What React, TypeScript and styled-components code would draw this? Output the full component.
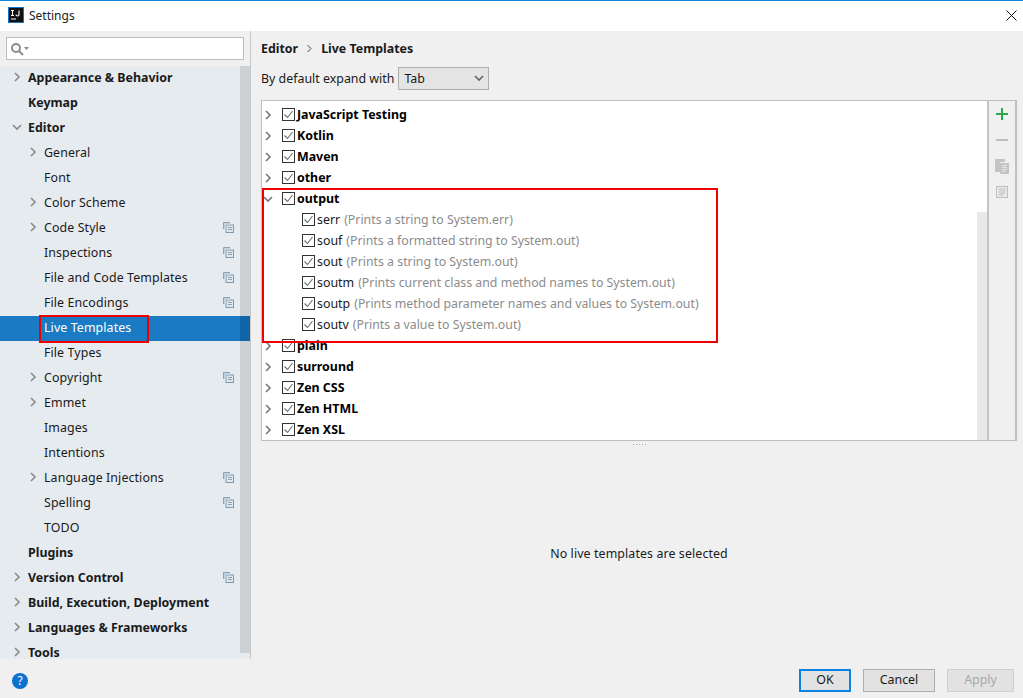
import React from 'react';
import styled, { createGlobalStyle } from 'styled-components';

const GlobalStyle = createGlobalStyle`
  html, body {
    margin: 0;
    padding: 0;
    background: #f0f0f0;
  }
  body {
    font-family: "Noto Sans", "Open Sans", sans-serif;
    font-size: 12.4px;
    color: #1a1a1a;
  }
`;

const Window = styled.div`
  width: 1023px;
  height: 698px;
  display: flex;
  flex-direction: column;
  overflow: hidden;
`;

const TitleBar = styled.div`
  height: 31px;
  flex: none;
  box-sizing: border-box;
  background: #fff;
  border-top: 1px solid #0f86d8;
  display: flex;
  align-items: center;
  padding: 0 6px 2px 8px;
  gap: 5px;
`;

const TitleText = styled.span`
  flex: 1;
  font-size: 12px;
  color: #222;
`;

const Body = styled.div`
  flex: 1;
  min-height: 0;
  display: flex;
`;

const Sidebar = styled.div`
  width: 250px;
  flex: none;
  background: #e6ebf0;
  border-right: 1px solid #c8c8c8;
  box-sizing: content-box;
  display: flex;
  flex-direction: column;
  overflow: hidden;
`;

const SearchWrap = styled.div`
  background: #f0f0f0;
  height: 35px;
  flex: none;
  padding: 6px 6px 0;
  box-sizing: border-box;
`;

const SearchBox = styled.div`
  width: 238px;
  height: 23px;
  box-sizing: border-box;
  background: #fff;
  border: 1px solid #bdbdbd;
  display: flex;
  align-items: center;
  padding-left: 3px;
`;

const TreeArea = styled.div`
  flex: 1;
  min-height: 0;
  display: flex;
`;

const Tree = styled.div`
  flex: 1;
  min-width: 0;
`;

const SideScroll = styled.div`
  width: 10px;
  height: 587px;
  flex: none;
  background: #cdd1d4;
`;

const NavRow = styled.div<{ $selected?: boolean }>`
  position: relative;
  height: 25px;
  box-sizing: border-box;
  padding-bottom: 3px;
  display: flex;
  align-items: center;
  width: 250px;
  background: ${(p) => (p.$selected ? '#1a7bc4' : 'transparent')};
  color: ${(p) => (p.$selected ? '#fff' : '#1a1a1a')};
`;

const ChevronSlot = styled.span<{ $depth: number }>`
  width: 12px;
  margin-left: ${(p) => (p.$depth ? 27 : 11)}px;
  display: flex;
  align-items: center;
  justify-content: center;
  flex: none;
`;

const NavLabel = styled.span<{ $bold?: boolean; $depth: number }>`
  margin-left: 5px;
  font-weight: ${(p) => (p.$bold ? 700 : 400)};
  letter-spacing: ${(p) => (p.$bold ? '0' : '0.1px')};
  white-space: nowrap;
`;

const ProjectIcon = styled.span`
  position: absolute;
  left: 223px;
  top: 6px;
  display: flex;
`;

const SelectedScroll = styled.span`
  position: absolute;
  right: 0;
  top: 0;
  width: 10px;
  height: 25px;
  background: #0f65a8;
`;

const RedMark = styled.div`
  position: absolute;
  border: 2px solid #f00000;
  box-sizing: border-box;
  pointer-events: none;
`;

const NavMark = styled(RedMark)`
  left: 39px;
  top: -1px;
  width: 110px;
  height: 28px;
`;

const Content = styled.div`
  flex: 1;
  min-width: 0;
  position: relative;
  background: #f0f0f0;
  padding: 0 6px 0 10px;
  display: flex;
  flex-direction: column;
`;

const Crumbs = styled.div`
  height: 34px;
  box-sizing: border-box;
  display: flex;
  align-items: center;
  gap: 8px;
  font-weight: 700;
  flex: none;
`;

const ExpandRow = styled.div`
  display: flex;
  align-items: center;
  gap: 4px;
  height: 24px;
  margin-top: 1px;
  flex: none;
`;

const Select = styled.div`
  width: 91px;
  height: 23px;
  box-sizing: border-box;
  background: #e4e4e4;
  border: 1px solid #adadad;
  display: flex;
  align-items: center;
  justify-content: space-between;
  padding: 0 4px 0 5px;
`;

const Panel = styled.div`
  margin-top: 10px;
  width: 756px;
  height: 341px;
  box-sizing: border-box;
  flex: none;
  border: 1px solid #bfbfbf;
  border-right-width: 2px;
  display: flex;
  position: relative;
`;

const List = styled.div`
  flex: 1;
  min-width: 0;
  background: #fff;
  padding-top: 3px;
  position: relative;
  overflow: hidden;
`;

const ListScroll = styled.div`
  position: absolute;
  right: 0;
  top: 111px;
  bottom: 0;
  width: 10px;
  background: #e8e8e8;
`;

const Toolbar = styled.div`
  width: 28px;
  flex: none;
  border-left: 2px solid #c4c4c4;
  display: flex;
  flex-direction: column;
  align-items: center;
  padding-top: 5px;
  gap: 10px;
  box-sizing: border-box;
`;

const ToolButton = styled.div`
  width: 16px;
  height: 16px;
  display: flex;
  align-items: center;
  justify-content: center;
`;

const Row = styled.div<{ $child?: boolean }>`
  height: 21px;
  display: flex;
  align-items: center;
  padding-left: ${(p) => (p.$child ? 40 : 0)}px;
  white-space: nowrap;
`;

const RowChevron = styled.span`
  width: 12px;
  flex: none;
  display: flex;
  justify-content: center;
  margin-right: 8px;
`;

const Check = styled.span`
  width: 13px;
  height: 13px;
  flex: none;
  box-sizing: border-box;
  border: 1px solid #333;
  background: #fff;
  margin-right: 2px;
  display: flex;
  align-items: center;
  justify-content: center;
`;

const GroupName = styled.span`
  font-weight: 700;
  color: #000;
`;

const TemplateName = styled.span`
  color: #1a1a1a;
`;

const TemplateDesc = styled.span`
  color: #8c8c8c;
  font-size: 12.32px;
  margin-left: 4px;
`;

const OutputMark = styled(RedMark)`
  left: 0;
  top: 87px;
  width: 456px;
  height: 155px;
`;

const Splitter = styled.div`
  height: 6px;
  flex: none;
  width: 756px;
  display: flex;
  justify-content: center;
  align-items: center;
`;

const Grip = styled.span`
  width: 15px;
  height: 3px;
  background-image: radial-gradient(circle, #a8a8a8 0.7px, transparent 0.8px);
  background-size: 3px 3px;
`;

const EmptyNote = styled.div`
  flex: 1;
  width: 756px;
  display: flex;
  align-items: center;
  justify-content: center;
  letter-spacing: 0.1px;
  color: #1a1a1a;
`;

const Footer = styled.div`
  height: 39px;
  flex: none;
  background: #f0f0f0;
  display: flex;
  align-items: center;
  padding: 4px 9px 0 12px;
  box-sizing: border-box;
  gap: 12px;
`;

const Help = styled.span`
  width: 16px;
  height: 16px;
  border-radius: 50%;
  background: #0b72d0;
  color: #fff;
  font-size: 12px;
  line-height: 16px;
  text-align: center;
  margin-right: auto;
`;

const DialogButton = styled.div<{ $kind?: 'primary' | 'disabled'; $w: number }>`
  width: ${(p) => p.$w}px;
  height: 23px;
  box-sizing: border-box;
  padding-bottom: 2px;
  display: flex;
  align-items: center;
  justify-content: center;
  background: #e2e2e2;
  border: ${(p) => (p.$kind === 'primary' ? '2px solid #0a84e0' : p.$kind === 'disabled' ? '1px solid #cfcfcf' : '1px solid #adadad')};
  color: ${(p) => (p.$kind === 'disabled' ? '#a8a8a8' : '#1a1a1a')};
`;

const Chevron = ({ open, color = '#8a8a8a' }: { open?: boolean; color?: string }) => (
  <svg width="10" height="10" viewBox="0 0 10 10" fill="none">
    <path d={open ? 'M1 3l4 4 4-4' : 'M3 1l4 4-4 4'} stroke={color} strokeWidth="1.6" />
  </svg>
);

const AppLogo = () => (
  <svg width="16" height="16" viewBox="0 0 16 16">
    <rect width="16" height="16" fill="#1272c4" />
    <rect x="1" y="1" width="14" height="14" fill="#111" />
    <path d="M3 3.5h3M4.5 3.5v5M3 8.5h3M11 3.5v4a1.5 1.5 0 0 1-3 0" stroke="#fff" strokeWidth="1.1" fill="none" />
    <rect x="3" y="11.5" width="5" height="1" fill="#fff" />
  </svg>
);

const SearchGlyph = () => (
  <svg width="20" height="14" viewBox="0 0 20 14" fill="none">
    <circle cx="6" cy="6" r="4" stroke="#8b8b8b" strokeWidth="2" />
    <path d="M9 9l4 4" stroke="#8b8b8b" strokeWidth="2" />
    <path d="M14 5h5l-2.5 3z" fill="#8b8b8b" />
  </svg>
);

const CopySmall = () => (
  <svg width="11" height="11" viewBox="0 0 11 11" fill="none">
    <path d="M7 .5H.5V7" stroke="#8ba3b8" />
    <rect x="3" y="3" width="7.5" height="7.5" stroke="#7d9ab3" fill="#dfe6ec" />
    <path d="M1 1h6v2H3v4H1z" fill="#c3d0da" />
    <path d="M5 5.5h4M5 7.5h4" stroke="#8ba3b8" />
  </svg>
);

const Tick = () => (
  <svg width="11" height="11" viewBox="0 0 11 11" fill="none">
    <path d="M1.5 5.5l3 3 5-6.5" stroke="#6e6e6e" strokeWidth="1.1" />
  </svg>
);

type NavItem = { label: string; bold?: boolean; depth?: number; arrow?: 'open' | 'closed'; project?: boolean; selected?: boolean };

const navItems: NavItem[] = [
  { label: 'Appearance & Behavior', bold: true, arrow: 'closed' },
  { label: 'Keymap', bold: true },
  { label: 'Editor', bold: true, arrow: 'open' },
  { label: 'General', depth: 1, arrow: 'closed' },
  { label: 'Font', depth: 1 },
  { label: 'Color Scheme', depth: 1, arrow: 'closed' },
  { label: 'Code Style', depth: 1, arrow: 'closed', project: true },
  { label: 'Inspections', depth: 1, project: true },
  { label: 'File and Code Templates', depth: 1, project: true },
  { label: 'File Encodings', depth: 1, project: true },
  { label: 'Live Templates', depth: 1, selected: true },
  { label: 'File Types', depth: 1 },
  { label: 'Copyright', depth: 1, arrow: 'closed', project: true },
  { label: 'Emmet', depth: 1, arrow: 'closed' },
  { label: 'Images', depth: 1 },
  { label: 'Intentions', depth: 1 },
  { label: 'Language Injections', depth: 1, arrow: 'closed', project: true },
  { label: 'Spelling', depth: 1, project: true },
  { label: 'TODO', depth: 1 },
  { label: 'Plugins', bold: true },
  { label: 'Version Control', bold: true, arrow: 'closed', project: true },
  { label: 'Build, Execution, Deployment', bold: true, arrow: 'closed' },
  { label: 'Languages & Frameworks', bold: true, arrow: 'closed' },
  { label: 'Tools', bold: true, arrow: 'closed' },
];

const groupsBefore = ['JavaScript Testing', 'Kotlin', 'Maven', 'other'];
const groupsAfter = ['plain', 'surround', 'Zen CSS', 'Zen HTML', 'Zen XSL'];

const templates = [
  ['serr', '(Prints a string to System.err)'],
  ['souf', '(Prints a formatted string to System.out)'],
  ['sout', '(Prints a string to System.out)'],
  ['soutm', '(Prints current class and method names to System.out)'],
  ['soutp', '(Prints method parameter names and values to System.out)'],
  ['soutv', '(Prints a value to System.out)'],
];

const GroupRow = ({ name, open }: { name: string; open?: boolean }) => (
  <Row>
    <RowChevron>
      <Chevron open={open} color="#777" />
    </RowChevron>
    <Check>
      <Tick />
    </Check>
    <GroupName>{name}</GroupName>
  </Row>
);

export default function App() {
  return (
    <Window>
      <GlobalStyle />
      <TitleBar>
        <AppLogo />
        <TitleText>Settings</TitleText>
        <svg width="11" height="11" viewBox="0 0 11 11" fill="none">
          <path d="M.5.5l10 10M10.5.5l-10 10" stroke="#111" />
        </svg>
      </TitleBar>
      <Body>
        <Sidebar>
          <SearchWrap>
            <SearchBox>
              <SearchGlyph />
            </SearchBox>
          </SearchWrap>
          <TreeArea>
            <Tree>
              {navItems.map((item) => (
                <NavRow key={item.label} $selected={item.selected}>
                  <ChevronSlot $depth={item.depth ?? 0}>
                    {item.arrow && <Chevron open={item.arrow === 'open'} />}
                  </ChevronSlot>
                  <NavLabel $bold={item.bold} $depth={item.depth ?? 0}>
                    {item.label}
                  </NavLabel>
                  {item.project && (
                    <ProjectIcon>
                      <CopySmall />
                    </ProjectIcon>
                  )}
                  {item.selected && (
                    <>
                      <SelectedScroll />
                      <NavMark />
                    </>
                  )}
                </NavRow>
              ))}
            </Tree>
            <SideScroll />
          </TreeArea>
        </Sidebar>
        <Content>
          <Crumbs>
            <span>Editor</span>
            <svg width="7" height="9" viewBox="0 0 7 9" fill="none">
              <path d="M1.5 1l3.5 3.5L1.5 8" stroke="#444" />
            </svg>
            <span>Live Templates</span>
          </Crumbs>
          <ExpandRow>
            <span>By default expand with</span>
            <Select>
              <span>Tab</span>
              <Chevron open color="#666" />
            </Select>
          </ExpandRow>
          <Panel>
            <List>
              {groupsBefore.map((g) => (
                <GroupRow key={g} name={g} />
              ))}
              <GroupRow name="output" open />
              {templates.map(([name, desc]) => (
                <Row key={name} $child>
                  <Check>
                    <Tick />
                  </Check>
                  <TemplateName>{name}</TemplateName>
                  <TemplateDesc>{desc}</TemplateDesc>
                </Row>
              ))}
              {groupsAfter.map((g) => (
                <GroupRow key={g} name={g} />
              ))}
              <ListScroll />
              <OutputMark />
            </List>
            <Toolbar>
              <ToolButton>
                <svg width="12" height="12" viewBox="0 0 12 12">
                  <path d="M5 0h2v5h5v2H7v5H5V7H0V5h5z" fill="#2aa84a" />
                </svg>
              </ToolButton>
              <ToolButton>
                <svg width="12" height="2" viewBox="0 0 12 2">
                  <rect width="12" height="2" fill="#bdbdbd" />
                </svg>
              </ToolButton>
              <ToolButton>
                <svg width="14" height="16" viewBox="0 0 14 16">
                  <path d="M0 1h10v3H5v10H0z" fill="#c4c4c4" />
                  <rect x="5" y="5" width="9" height="11" fill="#c4c4c4" />
                  <path d="M7 7.5h5M7 9.5h5M7 11.5h5M7 13.5h3" stroke="#e6e6e6" />
                </svg>
              </ToolButton>
              <ToolButton>
                <svg width="12" height="12" viewBox="0 0 12 12" fill="none">
                  <rect x=".5" y=".5" width="11" height="11" stroke="#bdbdbd" fill="#ececec" />
                  <path d="M2.5 3h7M2.5 5h7M2.5 7h7M2.5 9h5" stroke="#bdbdbd" />
                </svg>
              </ToolButton>
            </Toolbar>
          </Panel>
          <Splitter>
            <Grip />
          </Splitter>
          <EmptyNote>No live templates are selected</EmptyNote>
        </Content>
      </Body>
      <Footer>
        <Help>?</Help>
        <DialogButton $kind="primary" $w={52}>
          OK
        </DialogButton>
        <DialogButton $w={72}>Cancel</DialogButton>
        <DialogButton $kind="disabled" $w={67}>
          Apply
        </DialogButton>
      </Footer>
    </Window>
  );
}
